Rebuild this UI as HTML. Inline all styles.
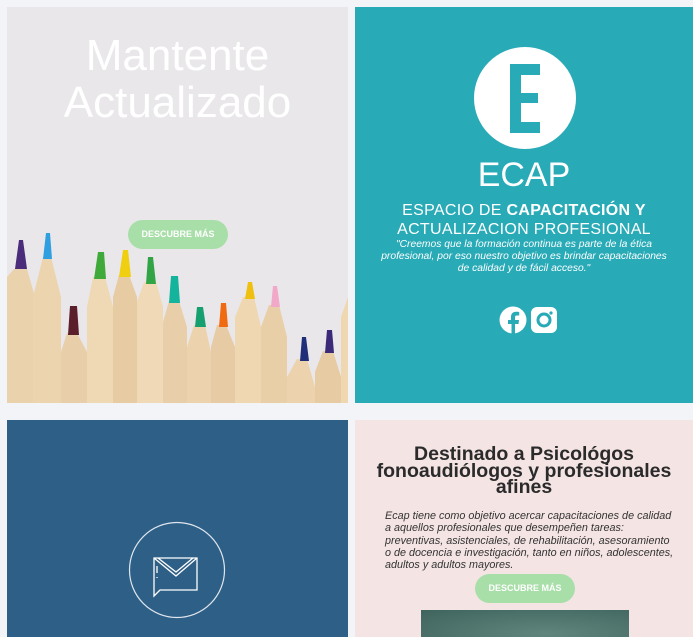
<!DOCTYPE html>
<html><head><meta charset="utf-8"><style>
*{margin:0;padding:0;box-sizing:border-box}
body{width:693px;height:637px;background:#f3f4f8;position:relative;overflow:hidden;font-family:"Liberation Sans",Arial,sans-serif}
.p{position:absolute;overflow:hidden}
.btn{position:absolute;background:#a8dea8;color:#fff;font-weight:bold;font-size:9px;border-radius:15px;text-align:center;line-height:29px;height:29px;width:100px}
</style></head><body>
<div class="p" style="left:7px;top:7px;width:341px;height:396px;background:#e9e7ea">
<div style="position:absolute;left:0;top:25px;width:341px;text-align:center;color:#fff;font-size:44px;line-height:47px">Mantente<br>Actualizado</div>
</div>
<svg width="341" height="396" style="position:absolute;left:7px;top:7px">
<g>
<polygon points="0,270 7,262 20,262 28,290 28,396 0,396" fill="#ead2ad"/>
<polygon points="8,262 12,233 16,233 20,262" fill="#4a2c7a"/>
<polygon points="26,290 36,250 44,250 54,290 54,396 26,396" fill="#ecd4ae"/>
<polygon points="36,252 39,226 43,226 45,252" fill="#2f9fe0"/>
<polygon points="54,345 60,326 70,326 80,345 80,396 54,396" fill="#e8cfaa"/>
<polygon points="61,328 63,299 70,299 72,328" fill="#5a1f2a"/>
<polygon points="80,300 86,270 98,270 106,300 106,396 80,396" fill="#efd8b4"/>
<polygon points="87,272 91,245 97,245 99,272" fill="#3fa93a"/>
<polygon points="106,290 112,268 122,268 130,290 130,396 106,396" fill="#e6cba3"/>
<polygon points="112,270 116,243 121,243 124,270" fill="#f0cf10"/>
<polygon points="130,295 137,275 149,275 156,300 156,396 130,396" fill="#f0d9b6"/>
<polygon points="139,277 141,250 146,250 149,277" fill="#31a546"/>
<polygon points="156,315 162,294 172,294 180,320 180,396 156,396" fill="#e8cfa9"/>
<polygon points="162,296 164,269 171,269 173,296" fill="#13b39c"/>
<polygon points="180,340 187,318 198,318 204,345 204,396 180,396" fill="#ecd3ae"/>
<polygon points="188,320 190,300 196,300 199,320" fill="#16a070"/>
<polygon points="204,340 210,318 219,318 228,340 228,396 204,396" fill="#e6cba4"/>
<polygon points="212,320 214,296 219,296 221,320" fill="#f06a12"/>
<polygon points="228,310 236,290 247,290 254,320 254,396 228,396" fill="#efd7b2"/>
<polygon points="238,292 241,275 245,275 248,292" fill="#f0c010"/>
<polygon points="254,320 262,298 272,298 280,330 280,396 254,396" fill="#e9cfa8"/>
<polygon points="264,300 266,279 270,279 273,300" fill="#f2a8c8"/>
<polygon points="280,370 290,352 300,352 308,380 308,396 280,396" fill="#ecd3ae"/>
<polygon points="293,354 295,330 299,330 302,354" fill="#1f2f78"/>
<polygon points="308,365 316,344 326,344 334,370 334,396 308,396" fill="#e6cba3"/>
<polygon points="318,346 320,323 325,323 327,346" fill="#3a2a78"/>
<polygon points="334,310 341,290 341,396 334,396" fill="#efd7b2"/>
</g>
</svg>
<div class="btn" style="left:128px;top:220px">DESCUBRE MÁS</div>

<div class="p" style="left:355px;top:7px;width:338px;height:396px;background:#28aab7;color:#fff;text-align:center">
<svg width="104" height="104" style="position:absolute;left:118px;top:40px"><circle cx="52" cy="51" r="51" fill="#fff"/><path d="M37 17h30v11h-19v18h17v10h-17v19h19v11h-30z" fill="#28aab7"/></svg>
<div style="position:absolute;left:0;top:148px;width:338px;font-size:34px;line-height:40px">ECAP</div>
<div style="position:absolute;left:0;top:194px;width:338px;font-size:16px;line-height:19px;letter-spacing:0.3px">ESPACIO DE <b>CAPACITACIÓN Y</b><br>ACTUALIZACION PROFESIONAL</div>
<div style="position:absolute;left:22px;top:232px;width:294px;font-size:10.3px;line-height:12px;font-style:italic">"Creemos que la formación continua es parte de la ética profesional, por eso nuestro objetivo es brindar capacitaciones de calidad y de fácil acceso."</div>
<svg width="60" height="30" style="position:absolute;left:144px;top:299px">
<circle cx="14" cy="14" r="13.5" fill="#fff"/><path d="M16 28v-10h3.5l.5-4h-4v-2.5c0-1.2.4-2 2-2h2.2V6c-.5-.1-1.7-.2-3.2-.2-3 0-5 1.8-5 5.2V14H9v4h3.5v10z" fill="#28aab7"/>
<rect x="32" y="1" width="26" height="26" rx="6" fill="#fff"/><circle cx="45" cy="14" r="6" fill="none" stroke="#28aab7" stroke-width="3"/><circle cx="52" cy="7" r="1.6" fill="#28aab7"/>
</svg>
</div>

<div class="p" style="left:7px;top:420px;width:341px;height:217px;background:#2e5f86">
<svg width="341" height="217"><circle cx="170" cy="150" r="47.5" fill="none" stroke="#dfe6ee" stroke-width="1.2"/>
<g fill="none" stroke="#fff" stroke-width="1.3"><path d="M147 138h43v32h-37l-6 6z"/><path d="M147 138l22 18 21-18"/><path d="M151 138l18 14 17-14"/><path d="M150 146v7M150 157v1"/></g></svg>
</div>

<div class="p" style="left:355px;top:420px;width:338px;height:217px;background:#f4e4e4">
<div style="position:absolute;left:0;top:26px;width:338px;text-align:center;font-weight:bold;font-size:19.5px;line-height:16.5px;color:#2b2b2b">Destinado a Psicológos<br>fonoaudiólogos y profesionales<br>afines</div>
<div style="position:absolute;left:30px;top:90px;width:290px;font-style:italic;font-size:10.8px;line-height:12.3px;color:#333">Ecap tiene como objetivo acercar capacitaciones de calidad a aquellos profesionales que desempeñen tareas: preventivas, asistenciales, de rehabilitación, asesoramiento o de docencia e investigación, tanto en niños, adolescentes, adultos y adultos mayores.</div>
<div class="btn" style="left:120px;top:154px">DESCUBRE MÁS</div>
<div style="position:absolute;left:66px;top:190px;width:208px;height:30px;background:radial-gradient(ellipse at 60% 80%,#5f857c,#3f645e)"></div>
</div>
</body></html>
